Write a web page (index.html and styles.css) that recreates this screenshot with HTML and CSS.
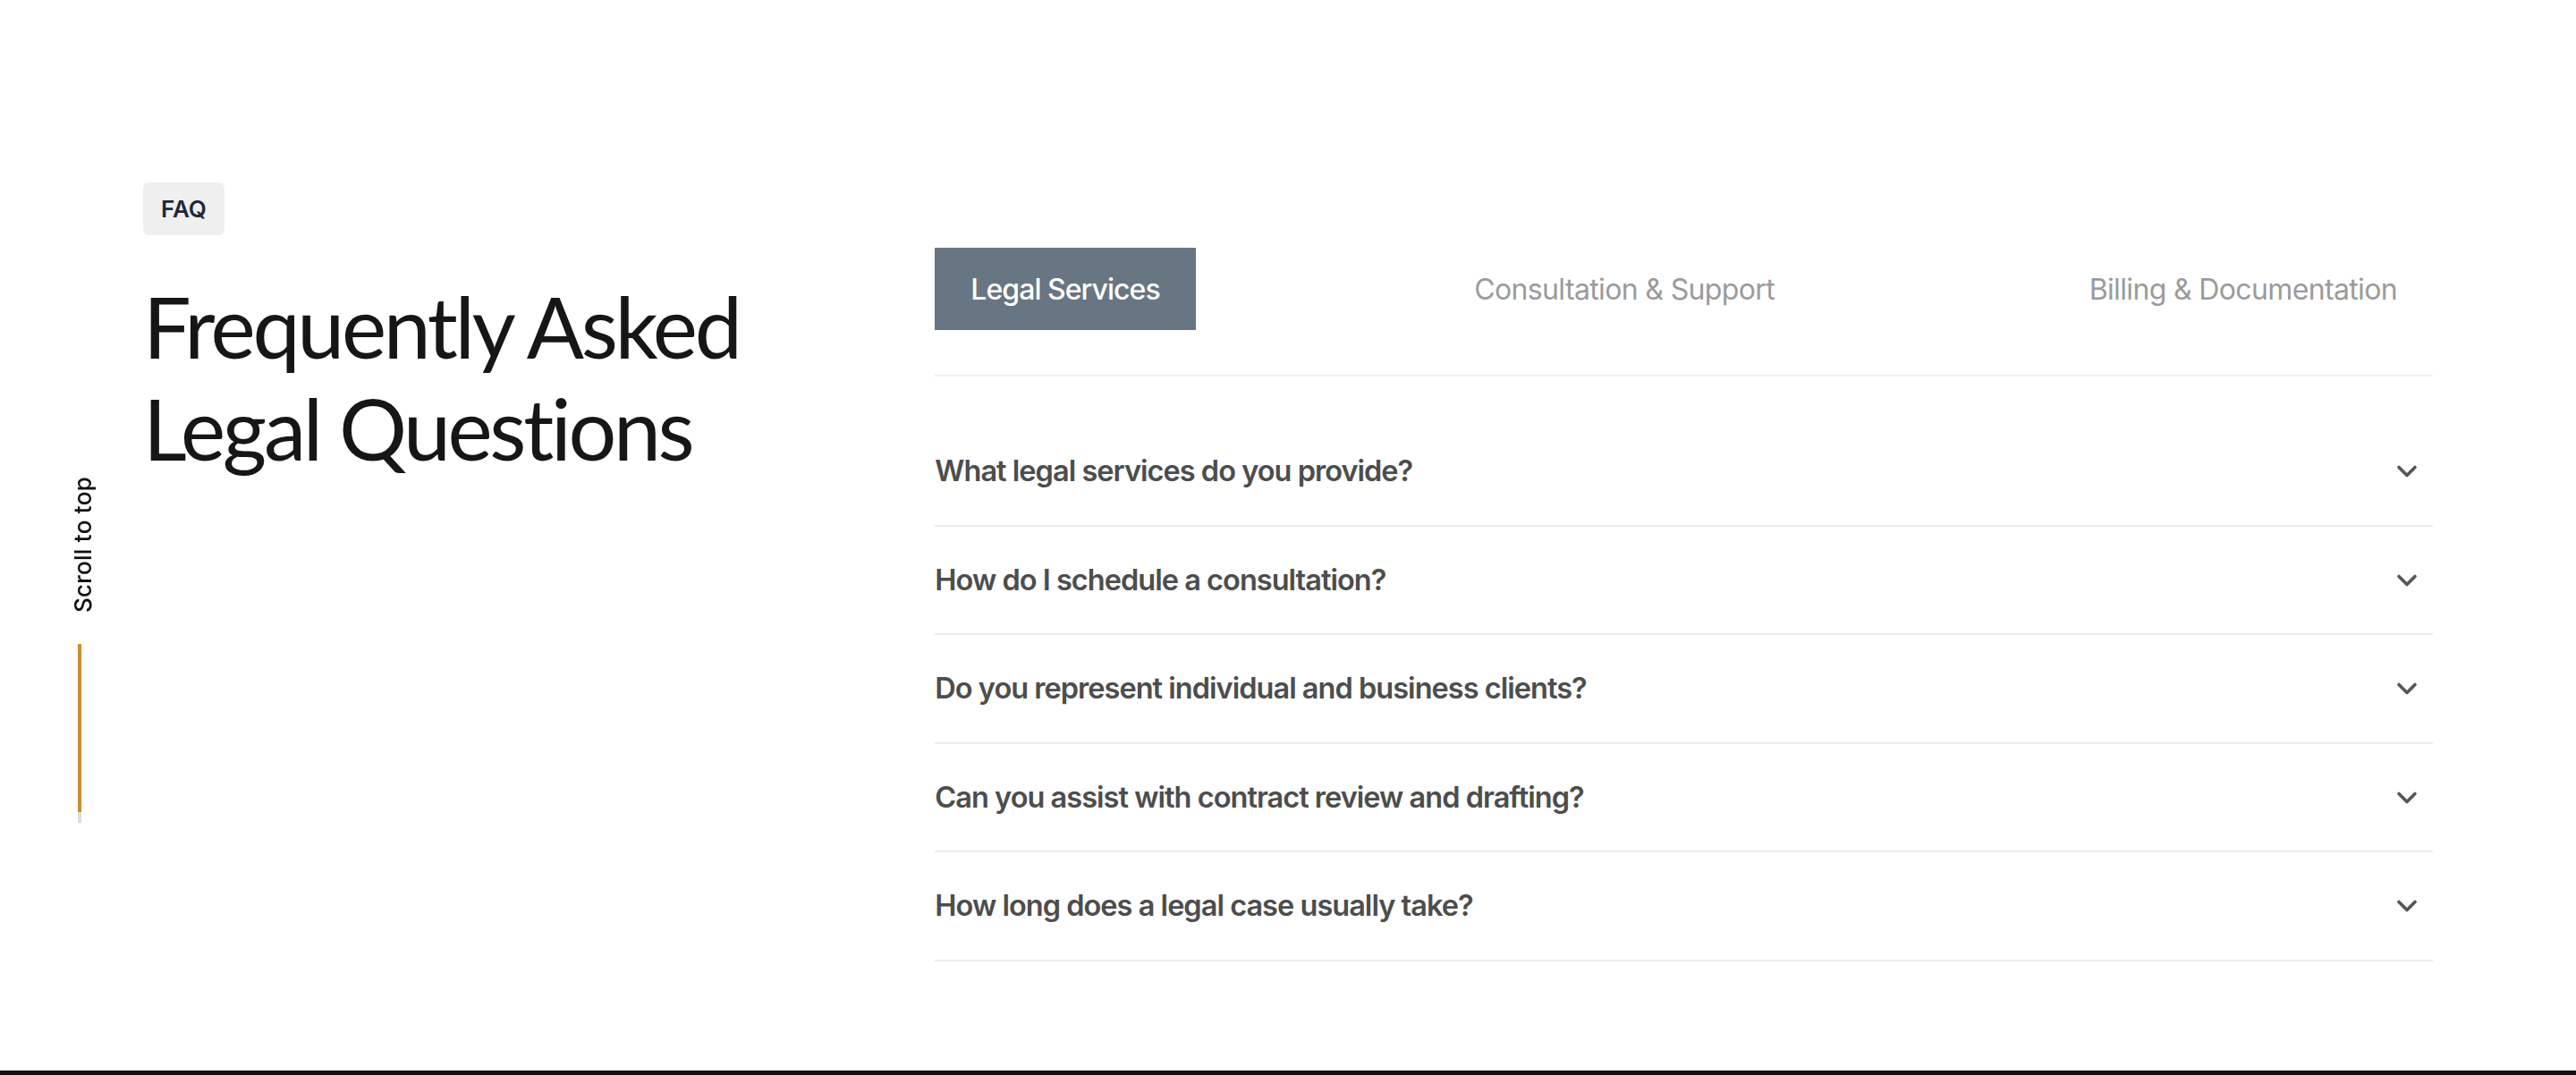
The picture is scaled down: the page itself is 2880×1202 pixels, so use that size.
FILE: index.html
```html
<!DOCTYPE html>
<html lang="en">
<head>
  <meta charset="UTF-8" />
  <title>FAQ - Legal Questions</title>
  <link rel="stylesheet" href="styles.css">
</head>
<body>

  <!-- Scroll to top rail -->
  <a class="scroll-top" href="#top">
    <span class="scroll-label">Scroll to top</span>
    <span class="scroll-line"></span>
  </a>

  <section class="faq" id="top">
    <div class="container">

      <!-- Left: heading -->
      <div class="faq-intro">
        <span class="badge">FAQ</span>
        <h1>Frequently Asked<br>Legal Questions</h1>
      </div>

      <!-- Right: tabs + questions -->
      <div class="faq-body">
        <div class="tabs">
          <button class="tab active">Legal Services</button>
          <button class="tab">Consultation &amp; Support</button>
          <button class="tab">Billing &amp; Documentation</button>
        </div>

        <ul class="questions">
          <li class="question">
            <span>What legal services do you provide?</span>
            <svg class="chevron" viewBox="0 0 24 24"><path d="M6 9l6 6 6-6" /></svg>
          </li>
          <li class="question">
            <span>How do I schedule a consultation?</span>
            <svg class="chevron" viewBox="0 0 24 24"><path d="M6 9l6 6 6-6" /></svg>
          </li>
          <li class="question">
            <span>Do you represent individual and business clients?</span>
            <svg class="chevron" viewBox="0 0 24 24"><path d="M6 9l6 6 6-6" /></svg>
          </li>
          <li class="question">
            <span>Can you assist with contract review and drafting?</span>
            <svg class="chevron" viewBox="0 0 24 24"><path d="M6 9l6 6 6-6" /></svg>
          </li>
          <li class="question">
            <span>How long does a legal case usually take?</span>
            <svg class="chevron" viewBox="0 0 24 24"><path d="M6 9l6 6 6-6" /></svg>
          </li>
        </ul>
      </div>

    </div>
  </section>

  <footer class="site-footer"></footer>

</body>
</html>
```

FILE: styles.css
```css
body {
  margin: 0;
  background-color: #fff;
  font-family: Inter, "Noto Sans", sans-serif;
  color: #333;
}
.scroll-top {
  position: fixed;
  left: 77px;
  top: 533px;
  display: flex;
  flex-direction: column;
  align-items: center;
  gap: 35px;
  text-decoration: none;
  color: #111;
}
.scroll-label {
  writing-mode: vertical-rl;
  transform: rotate(180deg);
  font-size: 26px;
  font-weight: 500;
  letter-spacing: 0.01em;
}
.scroll-line {
  width: 4px;
  height: 200px;
  margin-left: -7px;
  background: linear-gradient(#c98d33 0, #c98d33 188px, #dcdcdc 188px);
}
.faq {
  padding: 204px 0 122px;
}
.container {
  width: 2560px;
  margin: 0 auto;
  display: grid;
  grid-template-columns: 1fr 2fr;
  gap: 48px;
}
.badge {
  display: inline-block;
  padding: 0 20px;
  height: 59px;
  line-height: 59px;
  background-color: #efefef;
  border-radius: 7px;
  font-size: 26px;
  font-weight: 600;
  color: #1e293b;
}
h1 {
  margin: 44px 0 0;
  font-family: Lato, "Noto Sans", sans-serif;
  font-weight: 400;
  font-size: 95px;
  line-height: 114px;
  letter-spacing: -0.035em;
  color: #161616;
}
.faq-body {
  padding-top: 73px;
}
.tabs {
  display: flex;
  justify-content: space-between;
  padding-bottom: 50px;
  border-bottom: 2px solid #edf0f4;
}
.tab {
  height: 92px;
  padding: 0 40px;
  border: none;
  background: none;
  font-family: Inter, "Noto Sans", sans-serif;
  font-size: 32px;
  font-weight: 400;
  letter-spacing: -0.02em;
  color: #9b9b9b;
  cursor: pointer;
}
.tab.active {
  background-color: #687582;
  color: #fff;
  font-weight: 500;
  letter-spacing: -0.03em;
}
.questions {
  list-style: none;
  margin: 46px 0 0;
  padding: 0;
}
.question {
  display: flex;
  align-items: center;
  justify-content: space-between;
  padding: 40px 0 39.5px;
  line-height: 40px;
  border-bottom: 2px solid #ececec;
  font-size: 32.5px;
  font-weight: 600;
  letter-spacing: -0.03em;
  color: #4d4d4d;
}
.chevron {
  width: 36px;
  height: 36px;
  margin-right: 11px;
  fill: none;
  stroke: #555;
  stroke-width: 2.4;
  stroke-linecap: round;
  stroke-linejoin: round;
}
.site-footer {
  height: 300px;
  background-color: #111;
}
```
